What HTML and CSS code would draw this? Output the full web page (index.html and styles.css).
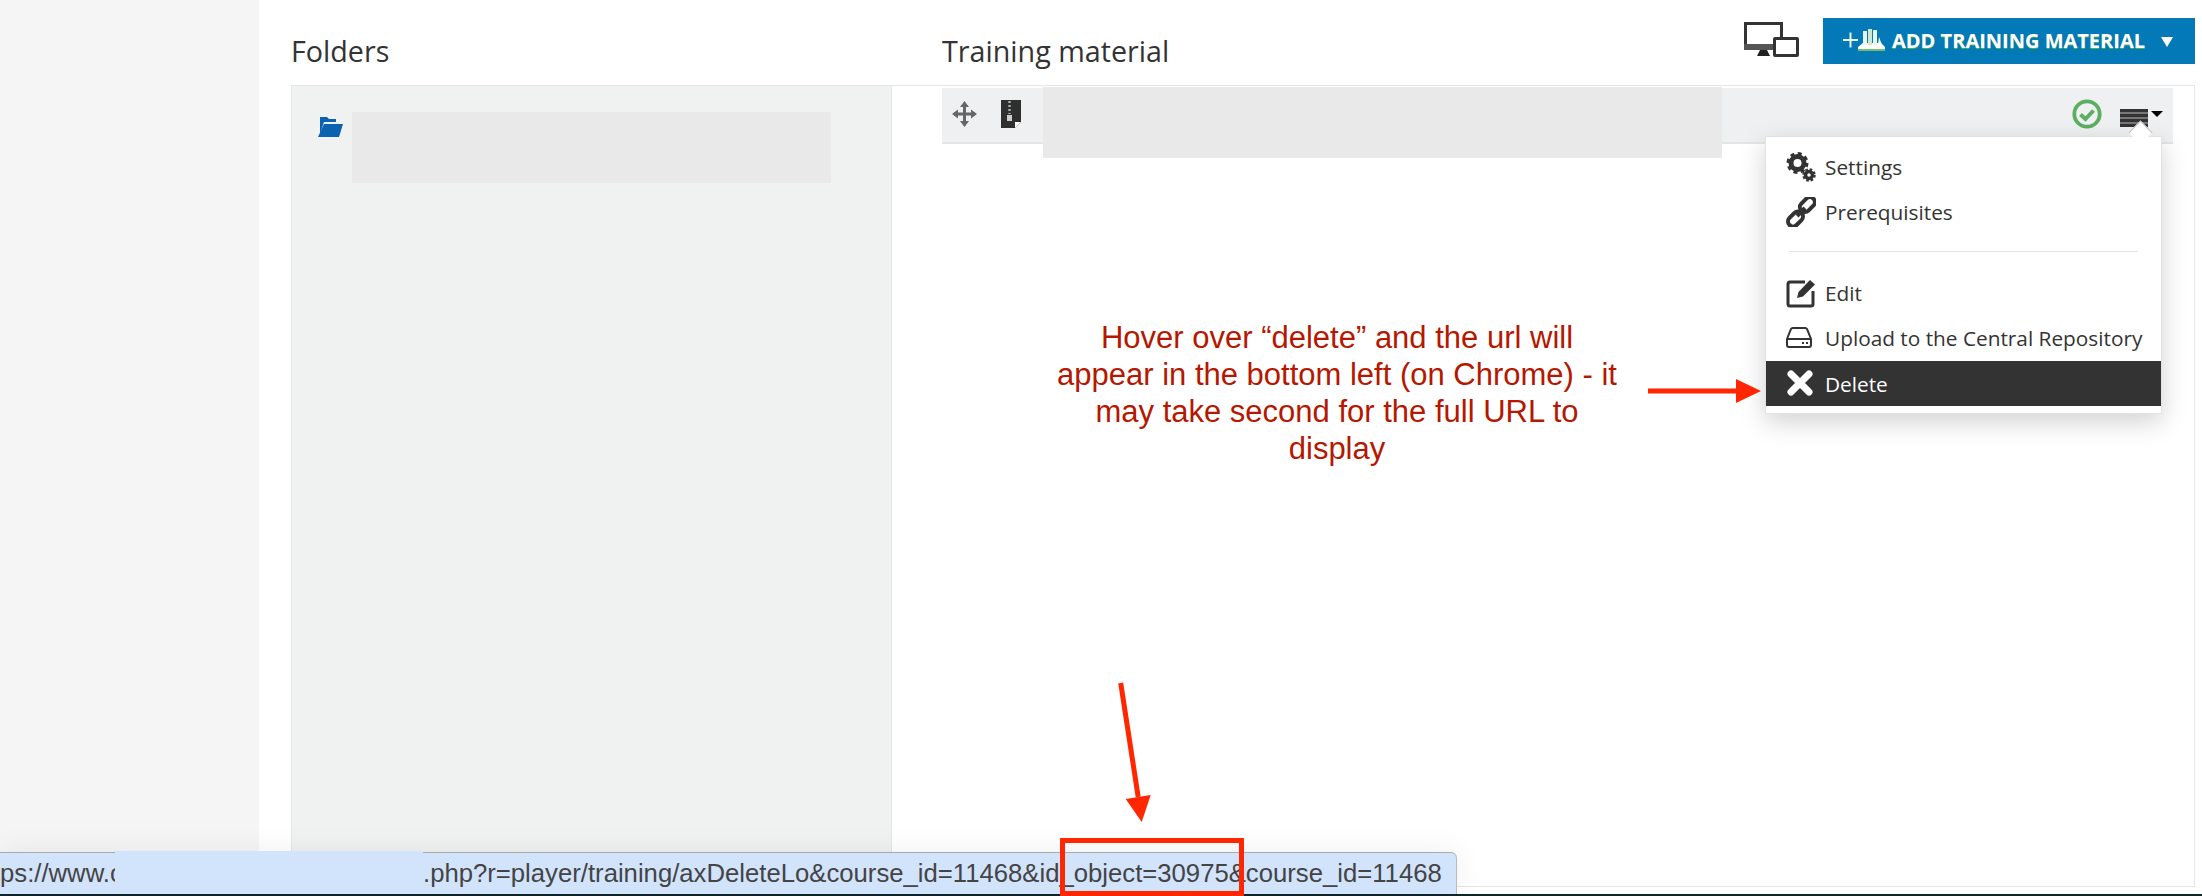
FILE: index.html
```html
<!DOCTYPE html>
<html lang="en">
<head>
    <meta charset="UTF-8">
    <title>Training material</title>
    <link rel="stylesheet" href="styles.css">
</head>
<body>

    <div class="page">
        <aside class="sidebar"></aside>

        <main class="content">
            <div class="heads">
                <h2 class="title title-folders">Folders</h2>
                <h2 class="title">Training material</h2>

                <svg class="devices" viewBox="0 0 55 35" width="55" height="35">
                    <rect x="1.5" y="1.5" width="36" height="24" fill="#fff" stroke="#333" stroke-width="3"/>
                    <rect x="0" y="22" width="39" height="6" fill="#555"/>
                    <path d="M13 34l3-6h7l3 6z" fill="#222"/>
                    <rect x="29" y="15" width="26" height="20" rx="2" fill="#333"/>
                    <rect x="32" y="18" width="20" height="14" fill="#fff"/>
                </svg>

                <button class="add-btn">
                    <svg class="add-icon" viewBox="0 0 42 24" width="42" height="24">
                        <path d="M0 12h15M7.500 4.500v15" stroke="#e8f3ea" stroke-width="2" fill="none"/>
                        <path d="M15 19l5-4h18l4 4v3H15z" fill="#fff"/>
                        <path d="M15 22h27" stroke="#6fbf73" stroke-width="2"/>
                        <rect x="20" y="3" width="4" height="14" fill="#e9f5ea"/>
                        <rect x="25" y="1" width="4" height="16" fill="#cfe8d1"/>
                        <rect x="30" y="2" width="4" height="15" fill="#e9f5ea"/>
                        <path d="M35 17l1-8 3 8z" fill="#fff"/>
                    </svg>
                    <span class="add-label">ADD TRAINING MATERIAL</span>
                    <span class="add-caret"></span>
                </button>
            </div>

            <div class="panels">
                <div class="folders">
                    <svg class="folder-icon" viewBox="0 0 25 20" width="25" height="20">
                        <path d="M2 0h7l2 2h7v3H6L2 17z" fill="#0a62b0"/>
                        <path d="M6 7h19l-4 13H0z" fill="#0a62b0"/>
                    </svg>
                    <div class="blur-folder"></div>
                </div>

                <div class="material">
                    <div class="lo-row">
                        <svg class="move-icon" viewBox="0 0 25 26" width="25" height="26">
                            <path d="M12.500 3v20M2 13h21" stroke="#666" stroke-width="3"/>
                            <path d="M12.500 0l4.500 6h-9zM12.500 26l4.500-6h-9zM0 13l6-4.500v9zM25 13l-6-4.500v9z" fill="#666"/>
                        </svg>
                        <svg class="zip-icon" viewBox="0 0 20 28" width="20" height="28">
                            <path d="M0 0h20v22l-6 6H0z" fill="#2f2f2f"/>
                            <path d="M14 28v-6h6z" fill="#fff"/>
                            <path d="M8.500 1v13" stroke="#aaa" stroke-width="2.500" stroke-dasharray="2 2"/>
                            <rect x="6" y="15" width="5" height="6" fill="#ccc"/>
                        </svg>
                        <div class="blur-title"></div>
                        <svg class="check-icon" viewBox="0 0 30 30" width="30" height="30">
                            <circle cx="15" cy="15" r="12.700" fill="none" stroke="#5cae60" stroke-width="3.800"/>
                            <path d="M8.500 15.500l5 4.500 8-8.500" fill="none" stroke="#5cae60" stroke-width="4"/>
                        </svg>
                        <div class="lines-icon"></div>
                        <div class="lines-caret"></div>
                    </div>
                </div>
            </div>
        </main>
    </div>

    <div class="desktop-strip"></div>

    <!-- dropdown opened from the row -->
    <div class="menu">
        <a class="menu-item">
            <svg class="menu-icon" viewBox="0 0 30 30" width="30" height="30">
                <circle cx="11.500" cy="11" r="6.500" fill="none" stroke="#333" stroke-width="5"/>
                <circle cx="11.500" cy="11" r="9.500" fill="none" stroke="#333" stroke-width="3" stroke-dasharray="4 3.450"/>
                <circle cx="23" cy="23" r="3.500" fill="none" stroke="#333" stroke-width="3.500"/>
                <circle cx="23" cy="23" r="5.500" fill="none" stroke="#333" stroke-width="2.500" stroke-dasharray="2.500 1.820"/>
            </svg>
            Settings
        </a>
        <a class="menu-item">
            <svg class="menu-icon" viewBox="0 0 30 30" width="30" height="30">
                <g fill="none" stroke="#333" stroke-width="4">
                    <rect x="13" y="3" width="17" height="10" rx="5" transform="rotate(-45 21 8)"/>
                    <rect x="1" y="17" width="17" height="10" rx="5" transform="rotate(-45 9.500 22)"/>
                    <path d="M11 19l8-8"/>
                </g>
            </svg>
            Prerequisites
        </a>
        <div class="menu-divider"></div>
        <a class="menu-item">
            <svg class="menu-icon" viewBox="0 0 30 30" width="30" height="30">
                <path d="M19 4H4a2 2 0 0 0-2 2v20a2 2 0 0 0 2 2h21a2 2 0 0 0 2-2V13" fill="none" stroke="#333" stroke-width="3"/>
                <path d="M11 20l1.500-6L24 2l5 4.500L17 18.500z" fill="#333"/>
            </svg>
            Edit
        </a>
        <a class="menu-item">
            <svg class="menu-icon" viewBox="0 0 30 30" width="30" height="30">
                <path d="M1 16l4-10a2 2 0 0 1 2-1h12a2 2 0 0 1 2 1l4 10v6a2 2 0 0 1-2 2H3a2 2 0 0 1-2-2zM1 16h24" fill="none" stroke="#333" stroke-width="2"/>
                <path d="M16 20h2M20 20h2" stroke="#333" stroke-width="2"/>
            </svg>
            Upload to the Central Repository
        </a>
        <a class="menu-item menu-item-active">
            <svg class="menu-icon" viewBox="0 0 30 30" width="30" height="30">
                <path d="M5 5l18 18M23 5L5 23" stroke="#fff" stroke-width="7" stroke-linecap="round"/>
            </svg>
            Delete
        </a>
    </div>

    <p class="note">Hover over “delete” and the url will<br>appear in the bottom left (on Chrome) - it<br>may take second for the full URL to<br>display</p>

    <!-- red annotation arrows, drawn on the whole page -->
    <svg class="arrows" viewBox="0 0 2202 896" width="2202" height="896">
        <path d="M1648 391h92" stroke="#ff2600" stroke-width="5"/>
        <path d="M1736 379l25 12-25 12z" fill="#ff2600"/>
        <path d="M1120.700 683l17.500 114" stroke="#ff2600" stroke-width="5"/>
        <path d="M1125.700 799l25-4-9 27z" fill="#ff2600"/>
    </svg>

    <div class="status-bar">
        <span class="url-start">ps://www.c</span>
        <span class="url-mask"></span>
        <span class="url-end">.php?r=player/training/axDeleteLo&amp;course_id=11468&amp;id_object=30975&amp;course_id=11468</span>
    </div>
    <div class="red-box"></div>

</body>
</html>
```

FILE: styles.css
```css
* {
    box-sizing: border-box;
}
body {
    margin: 0;
    width: 2202px;
    height: 896px;
    overflow: hidden;
    position: relative;
    background-color: #fff;
    font-family: "Open Sans", sans-serif;
    color: #333;
}
.page {
    display: flex;
    height: 894px;
}
.sidebar {
    width: 259px;
    background-color: #f5f5f5;
}
.content {
    flex: 1;
    padding: 0 7px 0 32px;
}
.desktop-strip {
    height: 2px;
    background-color: #10262b;
}

/* Headings and the button above the panels */
.heads {
    display: flex;
    align-items: flex-start;
    height: 85px;
    padding-top: 18px;
}
.title {
    margin: 16px 0 0 0;
    font-size: 28.700px;
    line-height: 34px;
    font-weight: 400;
    color: #333;
}
.title-folders {
    width: 651px;
}
.devices {
    margin: 4px 24px 0 auto;
}
.add-btn {
    display: flex;
    align-items: center;
    width: 372px;
    height: 46px;
    padding: 0 0 2px 20px;
    border: 0;
    background-color: #0479b8;
    color: #fff;
    font-family: "Open Sans", sans-serif;
    font-size: 20px;
    font-weight: 700;
}
.add-label {
    margin-left: 7px;
    text-shadow: 0 1px 0 #4caf50;
    white-space: nowrap;
}
.add-caret {
    margin: 3px 0 0 16px;
    border-top: 10px solid #fff;
    border-left: 6.500px solid transparent;
    border-right: 6.500px solid transparent;
}

/* Panels */
.panels {
    display: flex;
    height: 802px;
    border: 1px solid #e4e6e6;
}
.folders {
    display: flex;
    align-items: flex-start;
    gap: 9px;
    width: 600px;
    padding: 26px 0 0 26px;
    background-color: #f0f2f2;
    border-right: 1px solid #e4e6e6;
}
.folder-icon {
    margin-top: 5px;
}
.blur-folder {
    width: 479px;
    height: 71px;
    background-color: #e9e9e9;
}
.material {
    flex: 1;
    padding: 2px 21px 0 50px;
}
.lo-row {
    display: flex;
    align-items: center;
    height: 56px;
    padding: 0 10px 2px 10px;
    background-color: #eff0f2;
    border-bottom: 2px solid #e4e6e6;
}
.zip-icon {
    margin-left: 24px;
}
.blur-title {
    align-self: flex-start;
    width: 679px;
    height: 71px;
    margin: -1px 0 0 22px;
    background-color: #e9e9e9;
}
.check-icon {
    margin-left: auto;
}
.lines-icon {
    width: 28px;
    height: 18px;
    margin: 8px 0 0 18px;
    background: repeating-linear-gradient(#333 0, #333 3px, #777 3px, #777 5px);
}
.lines-caret {
    margin: 0 0 0 3px;
    border-top: 6px solid #000;
    border-left: 6px solid transparent;
    border-right: 6px solid transparent;
}

/* Dropdown */
.menu {
    position: absolute;
    left: 1765px;
    top: 136px;
    width: 397px;
    height: 278px;
    padding: 8px 0;
    background-color: #fff;
    border: 1px solid #e2e2e2;
    box-shadow: 0 8px 24px rgba(0, 0, 0, 0.18);
    font-size: 20.800px;
}
.menu::before {
    content: "";
    position: absolute;
    left: 366px;
    top: -13px;
    width: 16px;
    height: 16px;
    background-color: #fff;
    border-top: 1px solid #bbb;
    border-left: 1px solid #bbb;
    transform: rotate(45deg);
}
.menu-item {
    display: flex;
    align-items: center;
    gap: 9px;
    height: 45px;
    padding: 0 0 2px 20px;
    color: #333;
    white-space: nowrap;
}
.menu-item-active {
    padding-bottom: 0;
    background-color: #333;
    color: #fff;
}
.menu-divider {
    height: 1px;
    margin: 16px 23px 19px 23px;
    background-color: #e4e4e4;
}

/* Annotations */
.note {
    position: absolute;
    left: 1037px;
    top: 319px;
    width: 600px;
    margin: 0;
    text-align: center;
    font-family: "Liberation Sans", Arial, sans-serif;
    font-size: 31px;
    line-height: 37px;
    color: #b51700;
}
.arrows {
    position: absolute;
    left: 0;
    top: 0;
}

/* Chrome link preview at the bottom */
.status-bar {
    position: absolute;
    left: 0;
    top: 852px;
    display: flex;
    align-items: center;
    width: 1457px;
    height: 42px;
    background-color: #d2e3fc;
    border-top: 1px solid #aaa;
    border-right: 1px solid #bbb;
    border-top-right-radius: 6px;
    box-shadow: 0 0 30px rgba(0, 0, 0, 0.07);
    font-family: "Liberation Sans", Arial, sans-serif;
    font-size: 25.700px;
    color: #444;
    white-space: nowrap;
}
.url-start {
    width: 115px;
    overflow: hidden;
}
.url-mask {
    align-self: stretch;
    width: 308px;
    margin-top: -2px;
    background-color: #d2e3fc;
}
.red-box {
    position: absolute;
    left: 1060px;
    top: 838px;
    width: 184px;
    height: 58px;
    border: 5px solid #ff2600;
}
```
